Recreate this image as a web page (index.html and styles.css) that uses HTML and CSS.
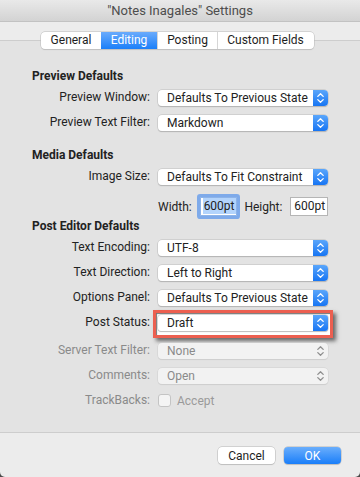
FILE: index.html
```html
<!DOCTYPE html>
<html>
  <head>
    <meta charset="UTF-8" />
    <title>"Notes Inagales" Settings</title>
    <link rel="stylesheet" href="styles.css">
  </head>
  <body>
    <div class="window">
      <div class="titlebar">"Notes Inagales" Settings</div>
      <div class="toolbar"></div>

      <div class="tabbox">
        <div class="tabs">
          <span class="tab t-general">General</span>
          <span class="tab t-editing active">Editing</span>
          <span class="tab t-posting">Posting</span>
          <span class="tab t-custom">Custom Fields</span>
        </div>

        <div class="form">
          <div class="section first">Preview Defaults</div>
          <div class="row">
            <span class="label">Preview Window:</span>
            <div class="popup"><span class="value">Defaults To Previous State</span><span class="arrows"><svg viewBox="0 0 15 16" width="15" height="16"><path d="M4.8 6.4 7.5 3.8 10.2 6.4M4.8 9.6 7.5 12.2 10.2 9.6" /></svg></span></div>
          </div>
          <div class="row">
            <span class="label">Preview Text Filter:</span>
            <div class="popup"><span class="value">Markdown</span><span class="arrows"><svg viewBox="0 0 15 16" width="15" height="16"><path d="M4.8 6.4 7.5 3.8 10.2 6.4M4.8 9.6 7.5 12.2 10.2 9.6" /></svg></span></div>
          </div>

          <div class="section">Media Defaults</div>
          <div class="row">
            <span class="label">Image Size:</span>
            <div class="popup"><span class="value">Defaults To Fit Constraint</span><span class="arrows"><svg viewBox="0 0 15 16" width="15" height="16"><path d="M4.8 6.4 7.5 3.8 10.2 6.4M4.8 9.6 7.5 12.2 10.2 9.6" /></svg></span></div>
          </div>
          <div class="row size-row">
            <span class="label"></span>
            <div class="sizes">
              <span class="small-label">Width:</span>
              <span class="field focused"><span class="selected">600pt</span></span>
              <span class="small-label height-label">Height:</span>
              <span class="field">600pt</span>
            </div>
          </div>

          <div class="section post">Post Editor Defaults</div>
          <div class="row">
            <span class="label">Text Encoding:</span>
            <div class="popup"><span class="value">UTF-8</span><span class="arrows"><svg viewBox="0 0 15 16" width="15" height="16"><path d="M4.8 6.4 7.5 3.8 10.2 6.4M4.8 9.6 7.5 12.2 10.2 9.6" /></svg></span></div>
          </div>
          <div class="row">
            <span class="label">Text Direction:</span>
            <div class="popup"><span class="value">Left to Right</span><span class="arrows"><svg viewBox="0 0 15 16" width="15" height="16"><path d="M4.8 6.4 7.5 3.8 10.2 6.4M4.8 9.6 7.5 12.2 10.2 9.6" /></svg></span></div>
          </div>
          <div class="row">
            <span class="label">Options Panel:</span>
            <div class="popup"><span class="value">Defaults To Previous State</span><span class="arrows"><svg viewBox="0 0 15 16" width="15" height="16"><path d="M4.8 6.4 7.5 3.8 10.2 6.4M4.8 9.6 7.5 12.2 10.2 9.6" /></svg></span></div>
          </div>
          <div class="row">
            <span class="label">Post Status:</span>
            <div class="highlight">
              <div class="popup"><span class="value">Draft</span><span class="arrows"><svg viewBox="0 0 15 16" width="15" height="16"><path d="M4.8 6.4 7.5 3.8 10.2 6.4M4.8 9.6 7.5 12.2 10.2 9.6" /></svg></span></div>
            </div>
          </div>
          <div class="row disabled">
            <span class="label">Server Text Filter:</span>
            <div class="popup"><span class="value">None</span><span class="arrows"><svg viewBox="0 0 15 16" width="15" height="16"><path d="M4.8 6.4 7.5 3.8 10.2 6.4M4.8 9.6 7.5 12.2 10.2 9.6" /></svg></span></div>
          </div>
          <div class="row disabled">
            <span class="label">Comments:</span>
            <div class="popup"><span class="value">Open</span><span class="arrows"><svg viewBox="0 0 15 16" width="15" height="16"><path d="M4.8 6.4 7.5 3.8 10.2 6.4M4.8 9.6 7.5 12.2 10.2 9.6" /></svg></span></div>
          </div>
          <div class="row disabled">
            <span class="label">TrackBacks:</span>
            <div class="check"><span class="box"></span><span>Accept</span></div>
          </div>
        </div>
      </div>

      <div class="footer">
        <button class="btn">Cancel</button>
        <button class="btn primary">OK</button>
      </div>
    </div>
  </body>
</html>
```

FILE: styles.css
```css
body {
  margin: 0;
  background-color: #4a4a4a;
  font-family: Roboto, "Liberation Sans", sans-serif;
  font-size: 12px;
  color: #222;
}
.window {
  width: 360px;
  height: 477px;
  background-color: #ececec;
  border-radius: 0 0 5px 5px;
  overflow: hidden;
}
.titlebar {
  height: 21px;
  line-height: 22px;
  text-align: center;
  font-size: 13px;
  color: #4d4d4d;
  background: linear-gradient(#e9e9e9, #d3d3d3);
  border-bottom: 1px solid #c2c2c2;
}
.toolbar {
  height: 18px;
  background-color: #ececec;
}
.tabbox {
  height: 391px;
  background-color: #e3e3e3;
  border-top: 1px solid #cdcdcd;
  border-bottom: 1px solid #cdcdcd;
}
.tabs {
  display: flex;
  margin: -9px 0 0 41px;
  width: 273px;
  height: 17px;
  background-color: #fff;
  border-radius: 4px;
  box-shadow: 0 0 0 0.5px #b9b9b9, 0 1px 1px rgba(0, 0, 0, 0.12);
  position: relative;
  overflow: hidden;
}
.tab {
  line-height: 17px;
  text-align: center;
  color: #1e1e1e;
  border-left: 1px solid #d6d6d6;
}
.tab:first-child {
  border-left: none;
}
.t-general { width: 60px; }
.t-editing { width: 56px; }
.t-posting { width: 59px; }
.t-custom { width: 95px; }
.tab.active {
  color: #fff;
  border-left: none;
  background: linear-gradient(#6aabfc, #1b7ff9);
}
.form {
  display: grid;
  grid-template-columns: 150px 170px;
  column-gap: 8px;
  align-content: start;
}
.section {
  grid-column: 1 / 3;
  padding-left: 32px;
  font-weight: bold;
  line-height: 17px;
  margin-top: 12px;
}
.section.first {
  margin-top: 19px;
}
.section.post {
  margin-top: 2px;
}
.row {
  display: contents;
}
.label {
  height: 25px;
  line-height: 25px;
  text-align: right;
  white-space: nowrap;
}
.row > .popup,
.row > .highlight,
.row > .check {
  align-self: center;
}
.popup {
  display: flex;
  height: 16px;
  background-color: #fff;
  border-radius: 4px;
  box-shadow: 0 0 0 0.5px #bdbdbd, 0 1px 1px rgba(0, 0, 0, 0.25);
  overflow: hidden;
}
.popup .value {
  flex: 1;
  padding-left: 9px;
  line-height: 16px;
  white-space: nowrap;
}
.popup .arrows {
  width: 15px;
  height: 16px;
  background: linear-gradient(#5aa6fb, #1775f3);
}
.popup svg {
  display: block;
}
.popup path {
  fill: none;
  stroke: #fff;
  stroke-width: 1.3;
  stroke-linecap: round;
  stroke-linejoin: round;
}
.size-row .label {
  height: 27px;
}
.sizes {
  display: flex;
  align-items: center;
  align-self: end;
  height: 19px;
}
.small-label {
  margin-right: 8px;
}
.height-label {
  margin-left: 7px;
}
.field {
  width: 38px;
  height: 17px;
  line-height: 17px;
  padding-left: 1px;
  background-color: #fff;
  border: 1px solid #b5b5b5;
  text-align: center;
}
.field.focused {
  border-color: #8db3e8;
  box-shadow: 0 0 0 3px #7eaaea;
  border-radius: 1px;
}
.selected {
  background-color: #b3d4fc;
  padding: 1px 1px;
}
.highlight {
  margin: 0 -5px;
  padding: 2px 2px 4px;
  border: 3px solid #ec5f50;
  background-color: #fff;
  box-shadow: inset 1px 1px 1px rgba(0, 0, 0, 0.55), 3px 3px 4px rgba(0, 0, 0, 0.55);
}
.highlight .popup {
  border-radius: 3px;
}
.disabled .label {
  color: #8a8a8a;
}
.disabled .popup {
  background-color: #f2f2f2;
  box-shadow: 0 0 0 0.5px #cfcfcf, 0 1px 1px rgba(0, 0, 0, 0.1);
  color: #8a8a8a;
}
.disabled .popup .arrows {
  background: none;
}
.disabled .popup path {
  stroke: #8f8f8f;
}
.check {
  display: flex;
  align-items: center;
  gap: 6px;
  color: #9a9a9a;
}
.box {
  width: 11px;
  height: 11px;
  background-color: #f4f4f4;
  border: 0.5px solid #c4c4c4;
  border-radius: 3px;
}
.footer {
  display: flex;
  justify-content: flex-end;
  gap: 9px;
  padding: 14px 19px 0 0;
}
.btn {
  width: 57px;
  height: 17px;
  padding: 0;
  font-family: Roboto, "Liberation Sans", sans-serif;
  font-size: 12px;
  color: #1e1e1e;
  background-color: #fff;
  border: none;
  border-radius: 4px;
  box-shadow: 0 0 0 0.5px #b5b5b5, 0 1px 1px rgba(0, 0, 0, 0.15);
}
.btn.primary {
  color: #fff;
  background: linear-gradient(#6aaefc, #1a7ef9);
}
```
